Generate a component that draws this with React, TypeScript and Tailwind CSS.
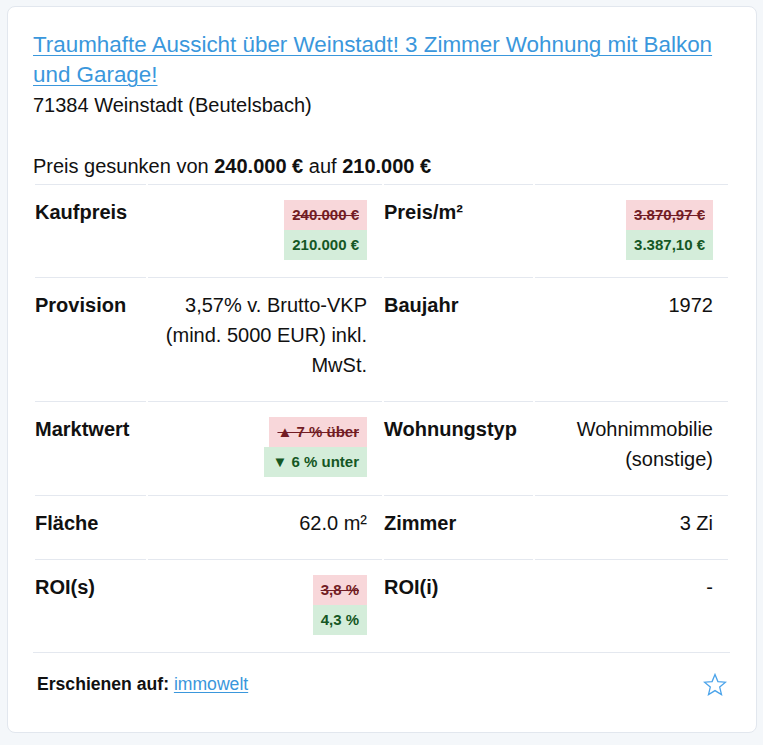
import React from 'react';

type Change = { old: string; now: string };

function PriceChange({ old, now }: Change) {
  return (
    <div className="flex flex-col items-end">
      <span className="bg-[#f8d7da] text-[#721c24] line-through px-2 h-[30px] leading-[30px] text-[15px] font-bold whitespace-nowrap">
        {old}
      </span>
      <span className="bg-[#d4edda] text-[#155724] px-2 h-[30px] leading-[30px] text-[15px] font-bold whitespace-nowrap">
        {now}
      </span>
    </div>
  );
}

const label = 'font-bold text-left align-top pt-[12px] pb-[19px] pr-[15px] border-t border-[#e4e8ef]';
const value = 'text-right align-top pt-[12px] pb-[19px] pr-[15px] border-t border-[#e4e8ef]';
const boxCell = 'text-right align-top pt-[15px] pb-[15px] pr-[15px] border-t border-[#e4e8ef]';

export default function App() {
  return (
    <div className="min-h-[745px] bg-[#f4f7fa] pt-[6px] pl-[7px] font-['Liberation_Sans',Arial,sans-serif] text-[#111]">
      <div className="w-[750px] rounded-lg border border-[#e2e7ee] bg-white pt-[23px] pl-[25px] pr-[26px] pb-[34px]">
        <a href="#" className="block text-[22.4px] leading-[30px] text-[#3a97dc] underline underline-offset-[3px] decoration-1">
          Traumhafte Aussicht über Weinstadt! 3 Zimmer Wohnung mit Balkon und Garage!
        </a>
        <p className="text-[20px] leading-[30px]">71384 Weinstadt (Beutelsbach)</p>

        <p className="mt-[31px] text-[20px] leading-[30px]">
          Preis gesunken von <b>240.000 €</b> auf <b>210.000 €</b>
        </p>

        <table className="mt-[1px] w-[697px] table-fixed border-separate border-spacing-[2px] text-[20px] leading-[30px]">
          <colgroup>
            <col className="w-[111px]" />
            <col className="w-[234px]" />
            <col className="w-[149px]" />
            <col className="w-[193px]" />
          </colgroup>
          <tbody>
            <tr>
              <td className={label}>Kaufpreis</td>
              <td className={boxCell}>
                <PriceChange old="240.000 €" now="210.000 €" />
              </td>
              <td className={label}>Preis/m²</td>
              <td className={boxCell}>
                <PriceChange old="3.870,97 €" now="3.387,10 €" />
              </td>
            </tr>
            <tr>
              <td className={label}>Provision</td>
              <td className={value}>3,57% v. Brutto-VKP (mind. 5000 EUR) inkl. MwSt.</td>
              <td className={label}>Baujahr</td>
              <td className={value}>1972</td>
            </tr>
            <tr>
              <td className={label}>Marktwert</td>
              <td className={boxCell}>
                <PriceChange old="▲ 7 % über" now="▼ 6 % unter" />
              </td>
              <td className={label}>Wohnungstyp</td>
              <td className={value}>Wohnimmobilie (sonstige)</td>
            </tr>
            <tr>
              <td className={label}>Fläche</td>
              <td className={value}>62.0 m²</td>
              <td className={label}>Zimmer</td>
              <td className={value}>3 Zi</td>
            </tr>
            <tr>
              <td className={label}>ROI(s)</td>
              <td className={boxCell}>
                <PriceChange old="3,8 %" now="4,3 %" />
              </td>
              <td className={label}>ROI(i)</td>
              <td className={value}>-</td>
            </tr>
          </tbody>
        </table>

        <div className="flex items-center justify-between border-t border-[#e4e8ef] pt-[18px] pl-[4px] pr-[3px]">
          <p className="text-[17.6px] leading-[27px]">
            <b>Erschienen auf:</b>{' '}
            <a href="#" className="text-[#3a97dc] underline underline-offset-2">immowelt</a>
          </p>
          <svg width="24" height="24" viewBox="0 0 24 24" className="mt-[1px]">
            <polygon
              points="12,1.5 14.9,8.6 22.5,9.2 16.7,14.1 18.5,21.6 12,17.6 5.5,21.6 7.3,14.1 1.5,9.2 9.1,8.6"
              fill="none"
              stroke="#4aa3ea"
              strokeWidth="1.3"
              strokeLinejoin="miter"
            />
          </svg>
        </div>
      </div>
    </div>
  );
}
